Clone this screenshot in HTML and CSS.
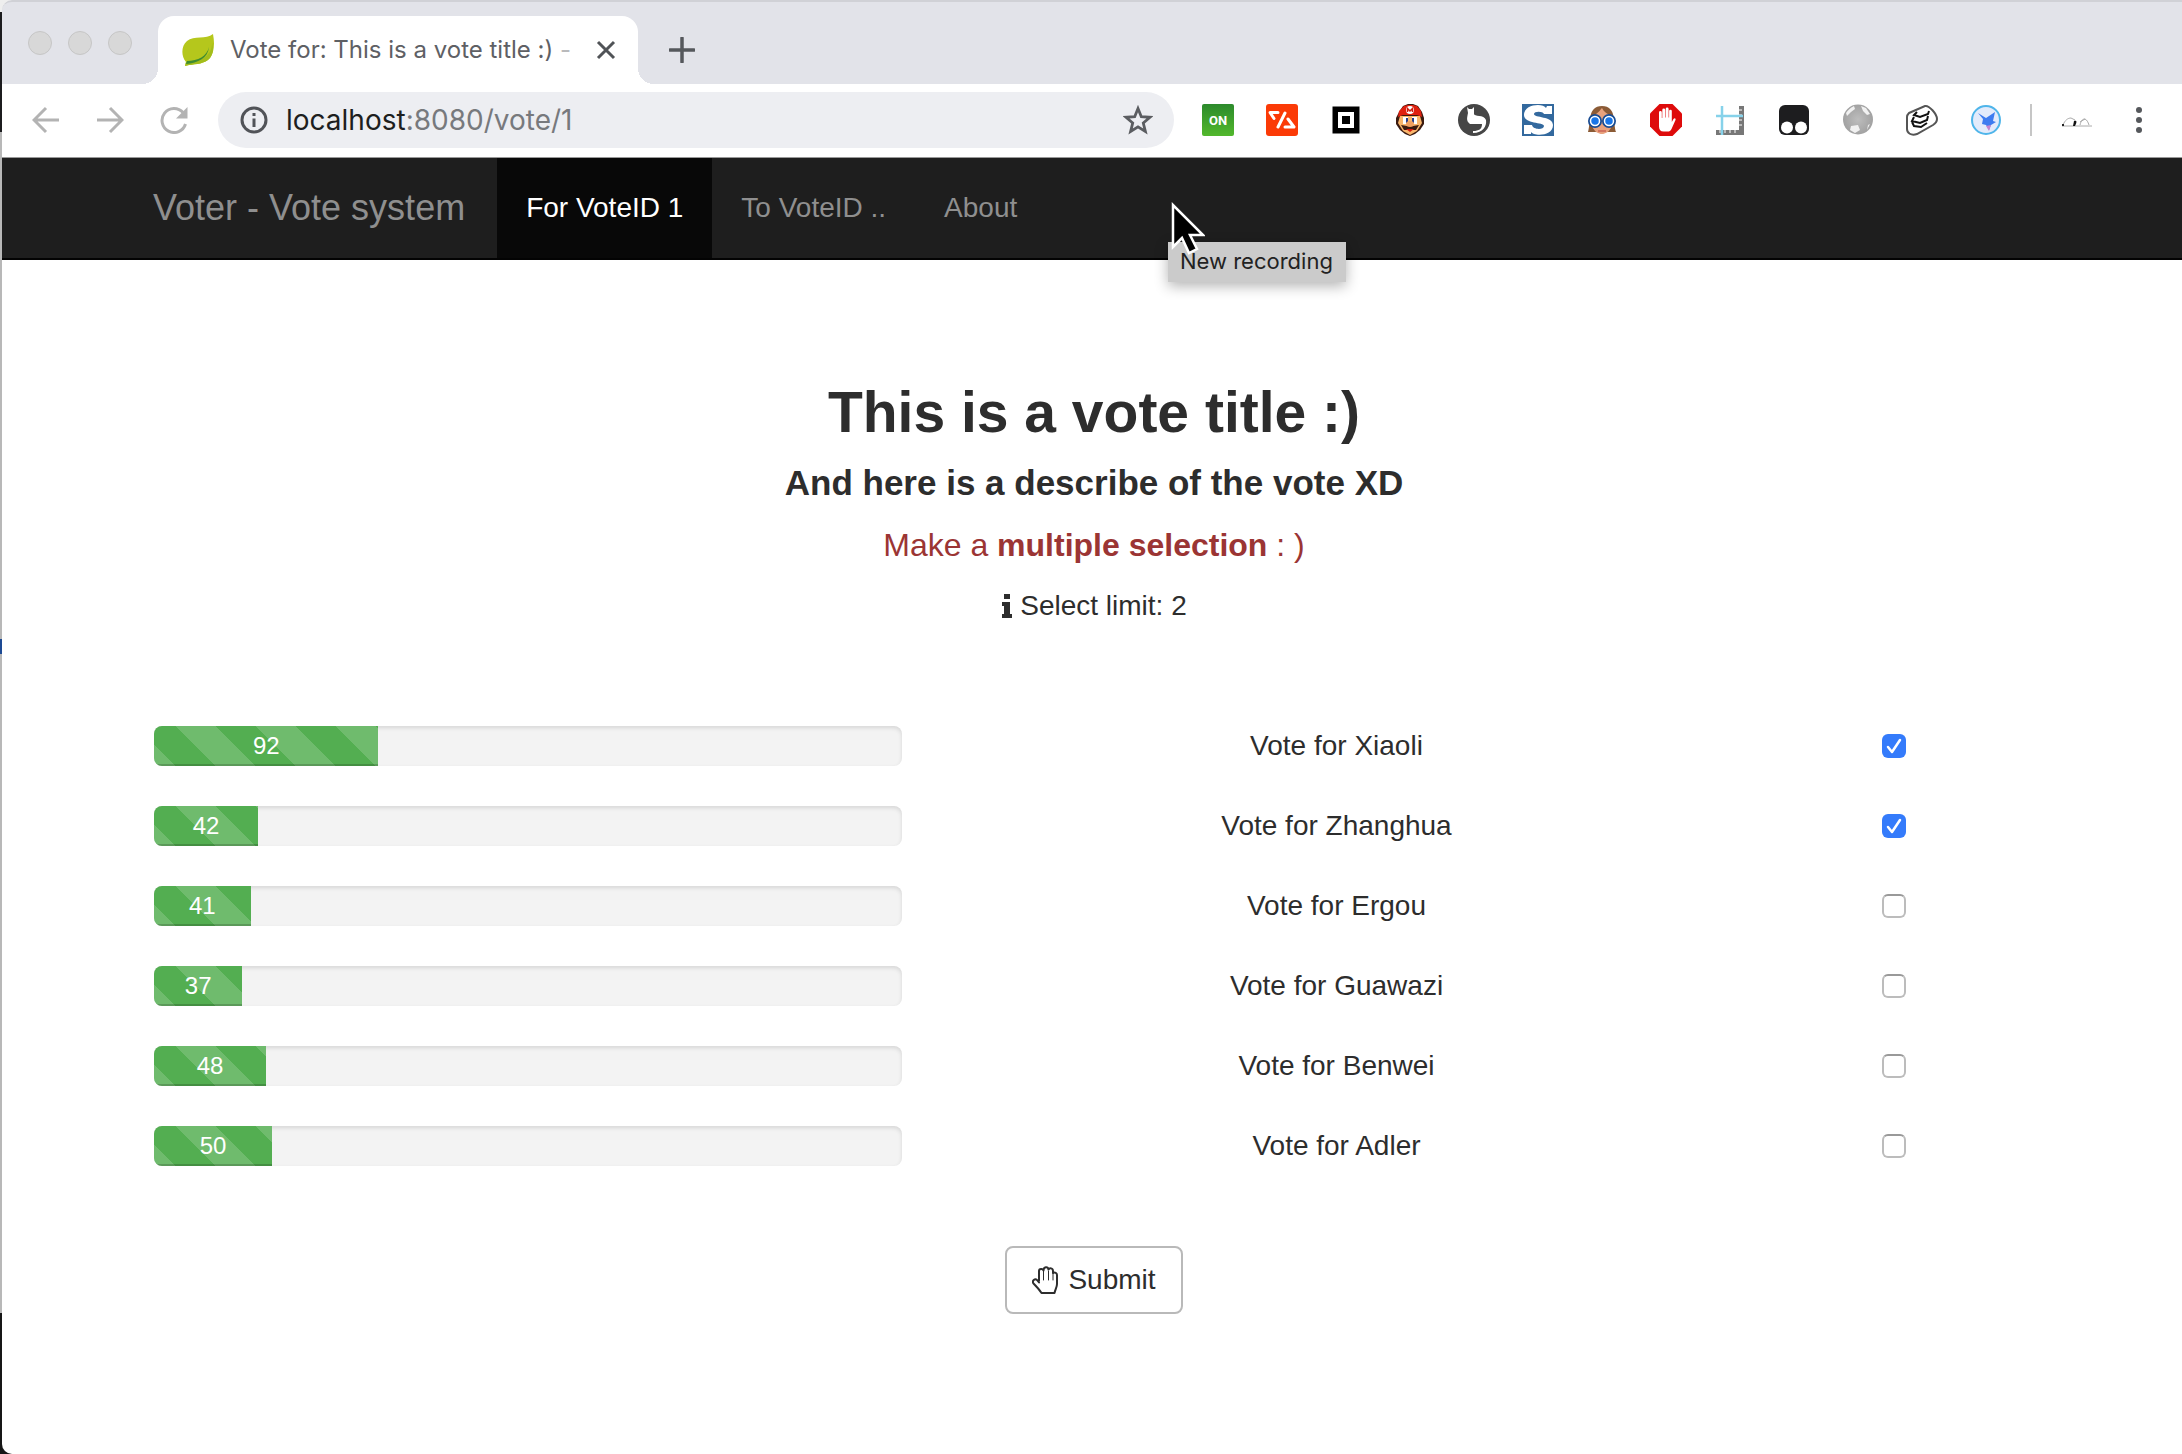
FILE: index.html
```html
<!DOCTYPE html>
<html lang="en">
<head>
<meta charset="utf-8">
<title>Vote for: This is a vote title :) - Voter</title>
<link rel="stylesheet" href="styles.css">
</head>
<body>
<div class="window">
  <header class="tabstrip">
    <div class="lights"><span class="light"></span><span class="light"></span><span class="light"></span></div>
    <div class="tab">
      <svg class="favicon" viewBox="0 0 32 32"><path d="M31 0c2 10 1 19-3 24-5 6-14 6-21 7l-4 1 1-4C-1 22-1 12 5 7c7-6 19-1 26-7z" fill="#b5c71c"/><path d="M30 9c0 12-9 18-26 19l-1 4 4-1c7-1 16-1 21-7 3-4 4-9 2-15z" fill="#a3bd1b"/><path d="M27 13c-2 9-11 14-22 14l-1 3c12-1 22-6 23-17z" fill="#3d8b32"/></svg>
      <span class="tab-title">Vote for: This is a vote title :) <span class="faded">-</span></span>
      <button class="icon-btn tab-close" aria-label="Close tab"><svg width="20" height="20" viewBox="0 0 20 20"><path d="M2 2l16 16M18 2L2 18" stroke="#505357" stroke-width="3"/></svg></button>
    </div>
    <button class="icon-btn new-tab" aria-label="New tab"><svg width="26" height="26" viewBox="0 0 26 26"><path d="M13 1v24M1 13h24" stroke="#55585c" stroke-width="3.5" stroke-linecap="round"/></svg></button>
  </header>
  <div class="toolbar">
    <div class="nav-buttons">
      <button class="icon-btn" aria-label="Back"><svg width="28" height="28" viewBox="0 0 28 28" fill="none" stroke="#b3b3b3" stroke-width="3"><path d="M27 14H3M14 2L2 14l12 12"/></svg></button>
      <button class="icon-btn" aria-label="Forward"><svg width="28" height="28" viewBox="0 0 28 28" fill="none" stroke="#b3b3b3" stroke-width="3"><path d="M1 14h24M14 2l12 12-12 12"/></svg></button>
      <button class="icon-btn" aria-label="Reload"><svg width="28" height="28" viewBox="0 0 28 28"><path d="M23 6.500A12 12 0 1 0 25.500 18" fill="none" stroke="#b3b3b3" stroke-width="3"/><path d="M27.500 1v11.500H16z" fill="#b3b3b3"/></svg></button>
    </div>
    <div class="omnibox">
      <svg width="28" height="28" viewBox="0 0 28 28"><circle cx="14" cy="14" r="12" fill="none" stroke="#515358" stroke-width="3"/><path d="M12.500 12.500h3V21h-3zM12.500 7h3v3h-3z" fill="#515358"/></svg>
      <span class="url"><span class="host">localhost</span>:8080/vote/1</span>
      <button class="icon-btn" aria-label="Bookmark"><svg width="30" height="30" viewBox="0 0 30 30"><path d="M15 3.500l3.300 8.200 8.700.6-6.700 5.700 2.100 8.500L15 21.900l-7.400 4.600 2.100-8.500L3 12.300l8.700-.6z" fill="none" stroke="#5b5d61" stroke-width="2.800"/></svg></button>
    </div>
    <div class="extensions">
      <svg viewBox="0 0 32 32"><defs><linearGradient id="gon" x2="0" y2="1"><stop stop-color="#2c8a2c"/><stop offset="1" stop-color="#52b82c"/></linearGradient></defs><rect width="32" height="32" rx="2" fill="url(#gon)"/><text x="16" y="21" text-anchor="middle" class="on-text">ON</text></svg>
      <svg viewBox="0 0 32 32"><rect width="32" height="32" rx="3" fill="#fb3a06"/><g fill="none" stroke="#fff" stroke-width="3" stroke-linecap="round" stroke-linejoin="round"><path d="M12 8.500H4l4 6M19 9l-7 14M22 15l6 8h-9"/></g></svg>
      <svg viewBox="0 0 32 32"><path d="M2.500 2.500h27v27h-27z" fill="#000"/><path d="M10 10h12v12H10z" fill="#000" stroke="#fff" stroke-width="4"/></svg>
      <svg viewBox="0 0 32 32"><path d="M2 14l3-6 4-6 5-2h5l5 2 4 6 2 6v6l-4 6-5 4-5 2-5-2-5-4-4-6z" fill="#3a1a10"/><path d="M6 12h20l2 7-5 8-7 4-7-4-5-8z" fill="#f9b66c"/><path d="M10 2l4-1h5l4 1 4 5 1 6-5-2H9l-5 2 1-6z" fill="#e0200f"/><circle cx="16" cy="6" r="4" fill="#fff"/><path d="M13.500 8V4.500L16 7l2.500-2.500V8" fill="none" stroke="#d01b0c" stroke-width="1.500"/><path d="M9 13h5v7H9zM18 13h5v7h-5z" fill="#fff"/><path d="M12 14h2v5h-2zM18 14h2v5h-2z" fill="#263c8c"/><path d="M7 21l6 1h6l6-1-3 5H10z" fill="#3a1a10"/><ellipse cx="16" cy="20" rx="4" ry="3" fill="#f0a060"/><path d="M12 25h8l-4 3z" fill="#d21b0c"/></svg>
      <svg viewBox="0 0 32 32"><circle cx="16" cy="16" r="16" fill="#464646"/><path d="M9 3l2 2h3l2-2v7c0 3 10 0 12 6 1 6-3 13-13 13v-2c6 0 9-2 9-7H12c-4-3-3-6-2-11z" fill="#fff"/></svg>
      <svg viewBox="0 0 32 32"><path d="M0 0h32v32H0z" fill="#33699e"/><path d="M30 2v8h-8c-1-3-10-3-10 0 0 4 19 2 19 11 0 12-20 11-22 7v2H2v-9h8c1 5 12 5 12 1 0-4-20-2-20-11C2 0 21-1 24 4l1-2z" fill="#fff"/></svg>
      <svg viewBox="0 0 32 32"><path d="M2 28C5 20 1 2 16 2s11 18 14 26z" fill="#8b5b36"/><path d="M6 12c6-2 8-6 10-8 2 4 5 6 10 8 3 9-3 18-10 18S3 21 6 12z" fill="#e8a27d"/><g fill="#1976e8" stroke="#194c92" stroke-width="2"><circle cx="9" cy="17" r="6"/><circle cx="23" cy="17" r="6"/></g><g fill="none" stroke="#fff" stroke-width="1.500"><circle cx="9" cy="17" r="4.500"/><circle cx="23" cy="17" r="4.500"/></g><path d="M12 27h8" stroke="#b44" stroke-width="1"/></svg>
      <svg viewBox="0 0 32 32"><path d="M9.500 0h13L32 9.500v13L22.500 32h-13L0 22.500v-13z" fill="#de0b0b"/><path d="M9 8.500a1.400 1.400 0 0 1 2.800 0V14h.5V6a1.400 1.400 0 0 1 2.900 0v7.500h.5V5a1.400 1.400 0 0 1 2.900 0v8.500h.5V7a1.300 1.300 0 0 1 2.700 0v11l1.700-3c1-1.500 2.700-.5 2 1l-4 9c-1 2-2 2.500-4 2.500h-4c-3 0-4.500-2-4.500-5z" fill="#fff"/></svg>
      <svg viewBox="0 0 32 32"><path d="M25 2h5v29H2v-5h23z" fill="#777"/><g stroke="#fff" stroke-width="1"><path d="M25 6h3M25 11h3M25 16h3M25 21h3M6 26v3M11 26v3M16 26v3M21 26v3"/></g><path d="M8 2v29M2 12h27" stroke="#86d2ea" stroke-width="2.500"/></svg>
      <svg viewBox="0 0 32 32"><rect x="1" y="1" width="30" height="30" rx="6" fill="#1d1d1f"/><circle cx="9" cy="23.500" r="6" fill="#fff"/><circle cx="23" cy="23.500" r="6" fill="#fff"/></svg>
      <svg viewBox="0 0 32 32"><defs><radialGradient id="globe"><stop stop-color="#bdbdbd"/><stop offset="1" stop-color="#a2a2a2"/></radialGradient></defs><circle cx="16" cy="15.500" r="15" fill="url(#globe)"/><path d="M4 9c2-3 4-5 8-7l1 3-4 3-4 4zM19 2l5 2 4 6-3 1-4-4zM9 22l7-1 2 5-5 3-5-3zM26 21l2-1-3 6z" fill="#f1f1f1"/></svg>
      <svg viewBox="0 0 32 32"><path d="M3 9L19 2c4-1 12 8 12 13 0 3-1 4-4 6L11 30C5 32 1 29 1 25V13c0-2 1-3 2-4z" fill="#fff" stroke="#555" stroke-width="2"/><g fill="none" stroke="#111" stroke-width="2"><path d="M11 8l-3 3 6 2 8-3 1-3M8 13l-2 4 8 2 7-3 1-4M6 18l2 4 7 1 6-4"/></g></svg>
      <svg viewBox="0 0 32 32"><circle cx="16" cy="16" r="14" fill="#e3ebfb" stroke="#4fb5ea" stroke-width="2"/><path d="M8 9l8 5 9-6-2 9 3 1-5 3-2 5-3-5-4-1 1-5z" fill="#3e7cf0"/><path d="M16 22l5-1-2 6z" fill="#c884cf"/></svg>
    </div>
    <span class="divider"></span>
    <svg class="avatar" width="32" height="32" viewBox="0 0 32 32"><path d="M2 22h30M3 21c2-5 5-7 8-7l4 2M20 21c1-4 2-6 5-6 2 1 3 3 4 6M20 18l5-3" fill="none" stroke="#aaa" stroke-width="1"/><path d="M14 17c3-1 3 1 1 5h-2z" fill="#111"/><path d="M2 20h2v2H2z" fill="#222"/></svg>
    <button class="icon-btn menu" aria-label="Menu"><svg width="6" height="28" viewBox="0 0 6 28" fill="#55585c"><circle cx="3" cy="4" r="3"/><circle cx="3" cy="14" r="3"/><circle cx="3" cy="24" r="3"/></svg></button>
  </div>
  <nav class="navbar">
    <div class="container navbar-inner">
      <a class="brand" href="#">Voter - Vote system</a>
      <a class="nav-link active" href="#">For VoteID 1</a>
      <a class="nav-link" href="#">To VoteID ..</a>
      <a class="nav-link" href="#">About</a>
    </div>
  </nav>
  <main class="container">
    <div class="intro">
      <h1>This is a vote title :)</h1>
      <h2>And here is a describe of the vote XD</h2>
      <p class="notice">Make a <strong>multiple selection</strong> : )</p>
      <p class="limit"><svg width="12" height="24" viewBox="0 0 12 24" fill="#2d2d2d"><path d="M3 0h6v5H3zM1 8h8v12h2v4H1v-4h2v-8H1z"/></svg>Select limit: 2</p>
    </div>
    <form class="ballot">
      <div class="row"><div class="cell"><div class="progress"><div class="bar" style="width:30%">92</div></div></div><label class="cell" for="c1">Vote for Xiaoli</label><div class="cell pick"><input id="c1" type="checkbox" checked></div></div>
      <div class="row"><div class="cell"><div class="progress"><div class="bar" style="width:13.9%">42</div></div></div><label class="cell" for="c2">Vote for Zhanghua</label><div class="cell pick"><input id="c2" type="checkbox" checked></div></div>
      <div class="row"><div class="cell"><div class="progress"><div class="bar" style="width:12.9%">41</div></div></div><label class="cell" for="c3">Vote for Ergou</label><div class="cell pick"><input id="c3" type="checkbox"></div></div>
      <div class="row"><div class="cell"><div class="progress"><div class="bar" style="width:11.8%">37</div></div></div><label class="cell" for="c4">Vote for Guawazi</label><div class="cell pick"><input id="c4" type="checkbox"></div></div>
      <div class="row"><div class="cell"><div class="progress"><div class="bar" style="width:15%">48</div></div></div><label class="cell" for="c5">Vote for Benwei</label><div class="cell pick"><input id="c5" type="checkbox"></div></div>
      <div class="row"><div class="cell"><div class="progress"><div class="bar" style="width:15.8%">50</div></div></div><label class="cell" for="c6">Vote for Adler</label><div class="cell pick"><input id="c6" type="checkbox"></div></div>
      <button class="submit" type="button"><svg width="26" height="28" viewBox="0 0 26 28" fill="none" stroke="#2d2d2d" stroke-linejoin="round" stroke-linecap="round"><path d="M7 15V5c0-2.500 4-2.500 4.500-.5C11.500.3 16 .3 16.500 3.500c1-2 4.500-1.500 4.500 1.500v2c2-1 4 0 4 2v9c0 3-1.500 5-2.500 9h-13C7 23 4 20 1.500 17.500-.5 15 3 12 5 14l2 2.500" stroke-width="2"/><path d="M11.500 5v9M16.500 5v9M21 7v7" stroke-width="1"/></svg>Submit</button>
    </form>
  </main>
  <div class="tooltip" role="tooltip">New recording</div>
  <svg class="cursor" width="34" height="54" viewBox="0 0 34 54"><path d="M2 3v42l9-9 7 15 8-4-7-14h13z" fill="#000" stroke="#fff" stroke-width="2.500"/></svg>
</div>
</body>
</html>
```
FILE: styles.css
```css
* { box-sizing: border-box; }
body {
  margin: 0;
  padding-left: 2px;
  /* sliver of the desktop behind the window's left edge */
  background: linear-gradient(#eee 12px, #1c1c1e 12px, #1c1c1e 132px, #b8b8b8 132px, #b8b8b8 639px, #1d4a94 639px, #1d4a94 654px, #b8b8b8 654px, #b8b8b8 1313px, #161616 1313px);
  color: #2d2d2d;
  font: 28px/40px "Liberation Sans", Arial, sans-serif;
}
.window {
  position: relative;
  min-height: 100vh;
  border-radius: 10px 0 0 10px;
  background: #fff;
}
.icon-btn {
  display: flex;
  padding: 0;
  border: 0;
  background: none;
}
svg { flex: none; }

.tabstrip {
  display: flex;
  align-items: flex-end;
  height: 84px;
  border-top: 2px solid #d0d1d6;
  border-radius: 10px 0 0 0;
  background: #e2e3e9;
}
.lights {
  display: flex;
  gap: 16px;
  width: 156px;
  padding: 0 0 29px 26px;
}
.light {
  width: 24px;
  height: 24px;
  border: 1px solid #c6c6c6;
  border-radius: 50%;
  background: #d8d8d8;
}
.tab {
  position: relative;
  display: flex;
  align-items: center;
  width: 480px;
  height: 68px;
  padding: 0 22px 0 24px;
  border-radius: 16px 16px 0 0;
  background: #fff;
}
.tab::before,
.tab::after {
  content: "";
  position: absolute;
  bottom: 0;
  width: 16px;
  height: 16px;
}
.tab::before {
  right: 100%;
  background: radial-gradient(circle at 0 0, transparent 16px, #fff 16px);
}
.tab::after {
  left: 100%;
  background: radial-gradient(circle at 100% 0, transparent 16px, #fff 16px);
}
.favicon { width: 32px; height: 32px; }
.tab-title {
  flex: 1;
  margin-left: 16px;
  font: 24px/32px Inter, sans-serif;
  color: #5e6064;
  white-space: nowrap;
}
.faded { color: #b9babc; }
.new-tab { margin: 0 0 21px 31px; }

.toolbar {
  display: flex;
  align-items: center;
  height: 74px;
  padding-bottom: 2px;
  border-bottom: 1px solid #999;
}
.nav-buttons {
  display: flex;
  gap: 36px;
  width: 216px;
  padding-left: 30px;
}
.omnibox {
  display: flex;
  flex: 1;
  align-items: center;
  gap: 18px;
  height: 56px;
  padding: 0 21px 0 22px;
  border-radius: 28px;
  background: #edeef2;
}
.url {
  flex: 1;
  font: 28px/40px Inter, sans-serif;
  color: #77797d;
}
.host { color: #1d1e20; }
.extensions {
  display: flex;
  gap: 32px;
  margin-left: 28px;
}
.extensions svg { width: 32px; height: 32px; }
.on-text { font: bold 13px Roboto, sans-serif; fill: #fff; }
.divider {
  width: 2px;
  height: 32px;
  margin: 0 28px;
  background: #c6c6c6;
}
.menu { margin: 0 40px 0 44px; }

.container {
  width: 100%;
  max-width: 1944px;
  margin: 0 auto;
  padding-left: 4px;
}
.navbar {
  background: #1e1e1e;
  border-bottom: 2px solid #030303;
}
.navbar-inner { display: flex; }
.navbar a {
  padding: 30px 29px;
  color: #8f8f8f;
  text-decoration: none;
}
.navbar .brand {
  padding: 30px 32px 30px 29px;
  font-size: 36px;
}
.navbar .active {
  background: #080808;
  color: #fff;
}

.intro {
  padding-top: 120px;
  text-align: center;
}
h1, h2, p { margin: 0; }
h1 { font-size: 57px; line-height: 64px; }
h2 { margin-top: 19px; font-size: 35px; line-height: 40px; }
.notice {
  margin-top: 22px;
  color: #9b3534;
  font-size: 32px;
}
.limit {
  display: flex;
  align-items: center;
  justify-content: center;
  gap: 7px;
  margin-top: 21px;
}
.ballot {
  display: flex;
  flex-direction: column;
  gap: 40px;
  padding-top: 100px;
}
.row {
  display: grid;
  grid-template-columns: 5fr 5fr 2fr;
  text-align: center;
}
.cell { padding: 0 30px; }
.progress {
  height: 40px;
  overflow: hidden;
  border-radius: 8px;
  background: #f3f3f3;
  box-shadow: inset 0 2px 4px rgba(0, 0, 0, .12);
}
.bar {
  height: 40px;
  color: #fff;
  font-size: 24px;
  background: linear-gradient(45deg, rgba(255,255,255,.16) 25%, transparent 25%, transparent 50%, rgba(255,255,255,.16) 50%, rgba(255,255,255,.16) 75%, transparent 75%) 22px 0 / 80px 80px #53ae51;
  box-shadow: inset 0 -2px 0 rgba(0, 0, 0, .18);
}
.pick {
  display: flex;
  align-items: center;
  justify-content: center;
  padding-right: 46px;
}
.pick input {
  appearance: none;
  width: 24px;
  height: 24px;
  margin: 0;
  border: 2px solid #bcbcbc;
  border-top-color: #999;
  border-radius: 6px;
  background: #fff;
}
.pick input:checked {
  border: 0;
  background: #347bfb url("data:image/svg+xml,%3Csvg xmlns='http://www.w3.org/2000/svg' viewBox='0 0 24 24'%3E%3Cpath d='M6 13l4 5 8-12' fill='none' stroke='white' stroke-width='2.500' stroke-linecap='round' stroke-linejoin='round'/%3E%3C/svg%3E");
}
.submit {
  display: flex;
  align-items: center;
  align-self: center;
  gap: 10px;
  height: 68px;
  margin-top: 40px;
  padding: 0 25px;
  border: 2px solid #b9b9b9;
  border-radius: 8px;
  background: #fff;
  color: inherit;
  font: inherit;
}

.tooltip {
  position: absolute;
  top: 242px;
  left: 1166px;
  padding: 3px 13px 5px 12px;
  background: #cbcbcb;
  box-shadow: 0 4px 14px rgba(0, 0, 0, .3);
  color: #222;
  font: 22px/32px Inter, sans-serif;
}
.cursor {
  position: absolute;
  top: 202px;
  left: 1169px;
}
```
